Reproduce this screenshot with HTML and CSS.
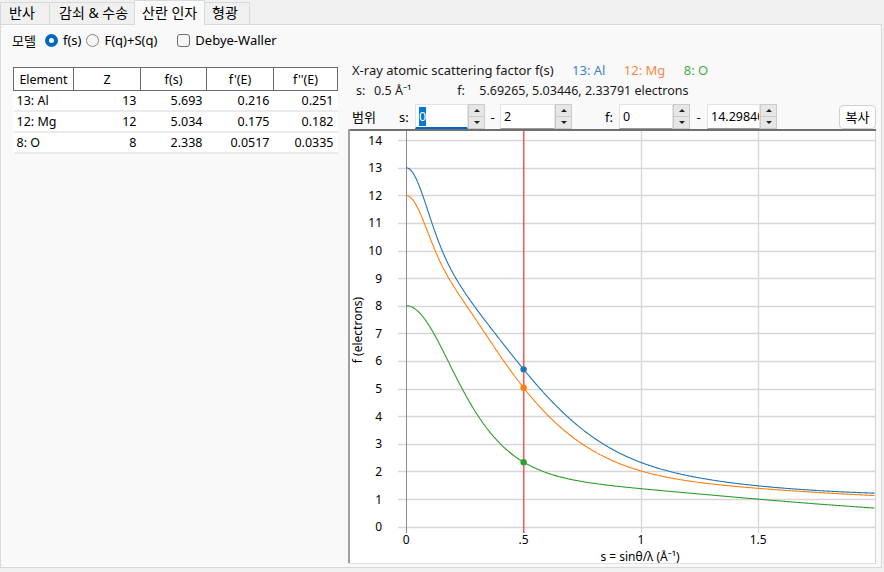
FILE: index.html
```html
<!DOCTYPE html>
<html>
<head>
<meta charset="utf-8">
<title>산란 인자</title>
<link rel="stylesheet" href="styles.css">
</head>
<body>

<div class="tabs">
  <div class="tab tab-1">반사</div>
  <div class="tab tab-2">감쇠 &amp; 수송</div>
  <div class="tab tab-3 active">산란 인자</div>
  <div class="tab tab-4">형광</div>
</div>

<div class="panel">
  <div class="model-row">
    <span class="model-label">모델</span>
    <span class="radio checked"></span><span class="option">f(s)</span>
    <span class="radio"></span><span class="option">F(q)+S(q)</span>
    <span class="checkbox"></span><span class="option">Debye-Waller</span>
  </div>

  <div class="main">
    <div class="left">
      <table class="elements">
        <thead>
          <tr><th class="c-el">Element</th><th class="c-z">Z</th><th class="c-f">f(s)</th><th class="c-f1">f'(E)</th><th class="c-f2">f''(E)</th></tr>
        </thead>
        <tbody>
          <tr><td>13: Al</td><td>13</td><td>5.693</td><td>0.216</td><td>0.251</td></tr>
          <tr><td>12: Mg</td><td>12</td><td>5.034</td><td>0.175</td><td>0.182</td></tr>
          <tr><td>8: O</td><td>8</td><td>2.338</td><td>0.0517</td><td>0.0335</td></tr>
        </tbody>
      </table>
    </div>

    <div class="right">
      <div class="title-row">
        <span>X-ray atomic scattering factor f(s)</span>
        <span class="legend al">13: Al</span>
        <span class="legend mg">12: Mg</span>
        <span class="legend o">8: O</span>
      </div>
      <div class="value-row">
        <span class="key">s:</span><span class="s-value">0.5 Å⁻¹</span>
        <span class="key f-key">f:</span><span>5.69265, 5.03446, 2.33791 electrons</span>
      </div>
      <div class="range-row">
        <span class="range-label">범위</span>
        <span class="axis-key s-key">s:</span>
        <div class="spin focused w53"><div class="field"><span class="selected">0</span></div><div class="arrows"><div class="up"></div><div class="down"></div></div></div>
        <span class="dash">-</span>
        <div class="spin w55"><div class="field">2</div><div class="arrows"><div class="up"></div><div class="down"></div></div></div>
        <span class="axis-key f-range-key">f:</span>
        <div class="spin w54"><div class="field">0</div><div class="arrows"><div class="up"></div><div class="down"></div></div></div>
        <span class="dash dash-2">-</span>
        <div class="spin w53"><div class="field">14.29840</div><div class="arrows"><div class="up"></div><div class="down"></div></div></div>
        <button class="copy-button">복사</button>
      </div>
      <div class="chart">
        <svg id="chart" width="528" height="435" viewBox="0 0 528 435">
          <rect x="0" y="0" width="528" height="435" fill="#ffffff"/>
          <g id="grid"></g>
          <line class="axis" x1="58.5" y1="2" x2="58.5" y2="404"/>
          <line class="cursor" x1="175.8" y1="2" x2="175.8" y2="404"/>
          <g id="curves"></g>
          <g id="ticks"></g>
          <text class="axis-title" x="292" y="427.5">s = sinθ/λ (Å⁻¹)</text>
          <text class="axis-title" transform="translate(9 201) rotate(-90)">f (electrons)</text>
          <line class="frame-top" x1="0" y1="1" x2="528" y2="1"/>
          <line class="frame-left" x1="1" y1="0" x2="1" y2="435"/>
          <line class="frame-right" x1="527.5" y1="2" x2="527.5" y2="435"/>
          <line class="frame-bottom" x1="0" y1="434.5" x2="528" y2="434.5"/>
        </svg>
      </div>
    </div>
  </div>
</div>

<script src="script.js"></script>
</body>
</html>
```

FILE: styles.css
```css
body {
  margin: 0;
  width: 884px;
  height: 572px;
  overflow: hidden;
  background-color: #f0f0f0;
  font-family: 'Noto Sans', 'Noto Sans CJK KR', sans-serif;
  font-size: 13px;
  color: #000;
}

/* Tabs */
.tabs {
  display: flex;
  align-items: flex-end;
  height: 24px;
  position: relative;
  z-index: 1;
}

.tab {
  box-sizing: border-box;
  height: 22px;
  line-height: 20px;
  padding-left: 8px;
  font-size: 14px;
  background-color: #f0f0f0;
  border: 1px solid #d9d9d9;
  border-bottom: none;
  margin-right: -1px;
  white-space: nowrap;
}

.tab-1 { width: 50px; }
.tab-2 { width: 86px; padding-left: 9px; }
.tab-3 { width: 71px; padding-left: 7px; }
.tab-4 { width: 46px; padding-left: 7px; }

.tab.active {
  height: 25px;
  line-height: 23px;
  margin-bottom: -1px;
  background-color: #f9f9f9;
}

.panel {
  box-sizing: border-box;
  width: 882px;
  height: 544px;
  border: 1px solid #d9d9d9;
  background-color: #f9f9f9;
}

/* Model options */
.model-row {
  display: flex;
  align-items: center;
  height: 30px;
  padding-left: 11px;
}

.model-label {
  margin-right: 9px;
}

.radio {
  box-sizing: border-box;
  width: 13px;
  height: 13px;
  border-radius: 50%;
  border: 1px solid #858585;
  background-color: #f6f6f6;
  margin-right: 5px;
}

.radio.checked {
  border: 4px solid #0067c0;
  background-color: #ffffff;
}

.checkbox {
  box-sizing: border-box;
  width: 13px;
  height: 13px;
  border-radius: 3px;
  border: 1px solid #6e6e6e;
  background-color: #f6f6f6;
  margin-left: 15px;
  margin-right: 5px;
}

.option {
  margin-right: 5px;
}

/* Main area */
.main {
  display: flex;
  margin-top: 6px;
}

.left {
  width: 347px;
}

.elements {
  margin: 6px 0 0 12px;
  border-collapse: collapse;
  background-color: #ffffff;
  font-size: 12.5px;
}

.elements th {
  height: 22px;
  padding: 0;
  font-weight: normal;
  border: 1px solid #6a6a6a;
  text-align: center;
}

.c-el { width: 59px; }
.c-z { width: 66px; }
.c-f { width: 65px; }
.c-f1 { width: 66px; }
.c-f2 { width: 63px; }

.elements td {
  height: 19px;
  padding: 0 4px 0 3px;
  text-align: right;
  border-bottom: 2px solid #ebebeb;
}

.elements td:first-child {
  text-align: left;
}

.right {
  flex: 1;
  display: flex;
  flex-direction: column;
}

.title-row {
  height: 19px;
  line-height: 19px;
  padding-left: 4px;
  color: #1a1a1a;
  white-space: nowrap;
}

.legend {
  margin-left: 15px;
}

.legend.al { color: #3a86c0; }
.legend.mg { color: #f5894a; }
.legend.o { color: #4caa4c; }

.value-row {
  height: 20px;
  line-height: 20px;
  margin-top: 1px;
  padding-left: 8px;
  font-size: 12.5px;
  color: #1a1a1a;
  white-space: nowrap;
}

.key {
  display: inline-block;
  width: 18px;
}

.s-value {
  display: inline-block;
  width: 40px;
}

.f-key {
  margin-left: 40px;
  width: 22px;
}

/* Range controls */
.range-row {
  display: flex;
  align-items: center;
  height: 25px;
  margin-top: 3px;
}

.range-label {
  margin-left: 4px;
  width: 25px;
}

.s-key {
  margin-left: 22px;
  width: 16px;
}

.f-range-key {
  margin-left: 33px;
  width: 14px;
}

.dash {
  width: 15px;
  text-align: center;
}

.dash-2 {
  width: 17px;
}

.spin {
  display: flex;
  height: 25px;
}

.field {
  box-sizing: border-box;
  height: 25px;
  line-height: 23px;
  padding-left: 3px;
  font-size: 12.5px;
  background-color: #ffffff;
  border: 1px solid #e3e3e3;
  border-bottom-color: #9a9a9a;
  overflow: hidden;
  white-space: nowrap;
}

.w53 .field { width: 53px; }
.w54 .field { width: 54px; }
.w55 .field { width: 55px; }

.spin.focused .field {
  border-bottom: 2px solid #0067c0;
}

.selected {
  background-color: #0078d7;
  color: #ffffff;
  padding: 1px 0;
}

.arrows {
  display: flex;
  flex-direction: column;
  width: 17px;
}

.up,
.down {
  box-sizing: border-box;
  flex: 1;
  background-color: #e6e6e6;
  border: 1px solid #cbcbcb;
  position: relative;
}

.down {
  border-top: none;
}

.up::after,
.down::after {
  content: '';
  position: absolute;
  left: 5px;
  top: 4px;
  border-left: 3px solid transparent;
  border-right: 3px solid transparent;
}

.up::after {
  border-bottom: 3px solid #222;
}

.down::after {
  border-top: 3px solid #222;
}

.copy-button {
  margin-left: auto;
  margin-right: 5px;
  width: 37px;
  height: 24px;
  padding: 0;
  font-family: 'Noto Sans CJK KR', sans-serif;
  font-size: 13px;
  background-color: #fdfdfd;
  border: 1px solid #d0d0d0;
  border-radius: 4px;
}

/* Chart */
.chart {
  height: 435px;
}

#chart {
  display: block;
  font-family: 'Noto Sans', sans-serif;
  font-size: 12px;
}

.grid {
  stroke: #d7d7d7;
  stroke-width: 1.3;
}

.axis {
  stroke: #8a8a8a;
  stroke-width: 1;
}

.cursor {
  stroke: #ff3a3a;
  stroke-width: 1.3;
}

.curve {
  fill: none;
  stroke-width: 1.1;
}

.ytick {
  text-anchor: end;
  dominant-baseline: central;
  fill: #000;
}

.xtick {
  text-anchor: middle;
  dominant-baseline: central;
  fill: #000;
}

.axis-title {
  text-anchor: middle;
  dominant-baseline: central;
  fill: #000;
}

.frame-top { stroke: #707070; stroke-width: 2; }
.frame-left { stroke: #a0a0a0; stroke-width: 2; }
.frame-right { stroke: #d4d4d4; stroke-width: 1; }
.frame-bottom { stroke: #e0e0e0; stroke-width: 1; }
```

FILE: script.js
```js
const svgNS = 'http://www.w3.org/2000/svg';
const grid = document.getElementById('grid');
const curves = document.getElementById('curves');
const ticks = document.getElementById('ticks');

// plot mapping (svg px)
const x0 = 58.3, y0 = 397.7, kx = 234.6, ky = 27.62;
const px = s => x0 + s * kx;
const py = f => y0 - f * ky;

// Cromer-Mann coefficients
const elements = [
  { color: '#1f77b4', a: [6.4202, 1.9002, 1.5936, 1.9646], b: [3.0387, 0.7426, 31.5472, 85.0886], c: 1.1151 },
  { color: '#ff7f0e', a: [5.4204, 2.1735, 1.2269, 2.3073], b: [2.8275, 79.2611, 0.3808, 7.1937], c: 0.8584 },
  { color: '#2ca02c', a: [3.0485, 2.2868, 1.5463, 0.867], b: [13.2771, 5.7011, 0.3239, 32.9089], c: 0.2508 }
];

function formFactor(el, s) {
  let f = el.c;
  for (let i = 0; i < 4; i++) {
    f += el.a[i] * Math.exp(-el.b[i] * s * s);
  }
  return f;
}

function add(parent, tag, attrs, text) {
  const node = document.createElementNS(svgNS, tag);
  for (const key in attrs) node.setAttribute(key, attrs[key]);
  if (text !== undefined) node.textContent = text;
  parent.appendChild(node);
  return node;
}

// horizontal grid + y labels
for (let k = 0; k <= 14; k++) {
  const y = Math.round(py(k)) + 0.5;
  add(grid, 'line', { class: 'grid', x1: 50, x2: 527, y1: y, y2: y });
  add(ticks, 'text', { class: 'ytick', x: 34, y: py(k) }, String(k));
}

// vertical grid + x labels (0.5 sits under the cursor)
[1, 1.5].forEach(s => {
  const x = Math.round(px(s)) + 0.5;
  add(grid, 'line', { class: 'grid', x1: x, x2: x, y1: 2, y2: 404 });
});
[[0, '0'], [0.5, '.5'], [1, '1'], [1.5, '1.5']].forEach(([s, label]) => {
  add(ticks, 'text', { class: 'xtick', x: px(s), y: 410 }, label);
});

// curves
const sMax = (527 - x0) / kx;
elements.forEach(el => {
  let d = '';
  for (let s = 0; s <= sMax; s += 0.004) {
    d += (d ? ' L' : 'M') + px(s).toFixed(2) + ' ' + py(formFactor(el, s)).toFixed(2);
  }
  add(curves, 'path', { class: 'curve', d: d, stroke: el.color });
});

// markers at the cursor
elements.forEach(el => {
  add(curves, 'circle', { cx: px(0.5), cy: py(formFactor(el, 0.5)), r: 3.2, fill: el.color });
});
```
